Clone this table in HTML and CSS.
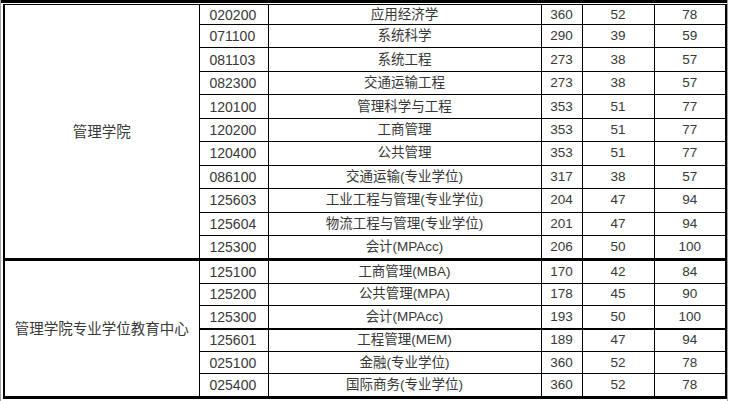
FILE: index.html
```html
<!DOCTYPE html>
<html lang="zh">
<head>
<meta charset="utf-8">
<link rel="stylesheet" href="styles.css">
</head>
<body>
<div class="frame">
  <div class="topbar"></div>
  <table class="grid">
    <colgroup>
      <col class="c-dept"><col class="c-code"><col class="c-name"><col class="c-n1"><col class="c-n2"><col class="c-n3">
    </colgroup>
    <tbody class="g1">
      <tr class="first"><td class="dept" rowspan="11">管理学院</td><td class="code">020200</td><td class="name">应用经济学</td><td class="num">360</td><td class="num">52</td><td class="num">78</td></tr>
      <tr><td class="code">071100</td><td class="name">系统科学</td><td class="num">290</td><td class="num">39</td><td class="num">59</td></tr>
      <tr><td class="code">081103</td><td class="name">系统工程</td><td class="num">273</td><td class="num">38</td><td class="num">57</td></tr>
      <tr><td class="code">082300</td><td class="name">交通运输工程</td><td class="num">273</td><td class="num">38</td><td class="num">57</td></tr>
      <tr><td class="code">120100</td><td class="name">管理科学与工程</td><td class="num">353</td><td class="num">51</td><td class="num">77</td></tr>
      <tr><td class="code">120200</td><td class="name">工商管理</td><td class="num">353</td><td class="num">51</td><td class="num">77</td></tr>
      <tr><td class="code">120400</td><td class="name">公共管理</td><td class="num">353</td><td class="num">51</td><td class="num">77</td></tr>
      <tr><td class="code">086100</td><td class="name">交通运输(专业学位)</td><td class="num">317</td><td class="num">38</td><td class="num">57</td></tr>
      <tr><td class="code">125603</td><td class="name">工业工程与管理(专业学位)</td><td class="num">204</td><td class="num">47</td><td class="num">94</td></tr>
      <tr><td class="code">125604</td><td class="name">物流工程与管理(专业学位)</td><td class="num">201</td><td class="num">47</td><td class="num">94</td></tr>
      <tr class="group-end"><td class="code">125300</td><td class="name">会计(MPAcc)</td><td class="num">206</td><td class="num">50</td><td class="num">100</td></tr>
    </tbody>
    <tbody class="g2">
      <tr><td class="dept" rowspan="6">管理学院专业学位教育中心</td><td class="code">125100</td><td class="name">工商管理(MBA)</td><td class="num">170</td><td class="num">42</td><td class="num">84</td></tr>
      <tr><td class="code">125200</td><td class="name">公共管理(MPA)</td><td class="num">178</td><td class="num">45</td><td class="num">90</td></tr>
      <tr class="mid-thick"><td class="code">125300</td><td class="name">会计(MPAcc)</td><td class="num">193</td><td class="num">50</td><td class="num">100</td></tr>
      <tr><td class="code">125601</td><td class="name">工程管理(MEM)</td><td class="num">189</td><td class="num">47</td><td class="num">94</td></tr>
      <tr><td class="code">025100</td><td class="name">金融(专业学位)</td><td class="num">360</td><td class="num">52</td><td class="num">78</td></tr>
      <tr class="group-end"><td class="code">025400</td><td class="name">国际商务(专业学位)</td><td class="num">360</td><td class="num">52</td><td class="num">78</td></tr>
    </tbody>
  </table>
</div>
</body>
</html>
```

FILE: styles.css
```css
html, body {
  margin: 0;
  padding: 0;
  background: #ffffff;
}

.frame {
  width: 726px;
  height: 401px;
  border-left: 1px solid #a3a3a3;
  border-right: 1px solid #a3a3a3;
  overflow: hidden;
  font-family: "Liberation Sans", "Noto Sans CJK SC", sans-serif;
  font-size: 13.5px;
  color: #383838;
}

.topbar {
  height: 3px;
  background: #000000;
  margin-bottom: 1px;
}

.grid {
  border-collapse: collapse;
  table-layout: fixed;
  width: 723px;
  margin-left: 2px;
}

.c-dept { width: 195px; }
.c-code { width: 69px; }
.c-name { width: 273px; }
.c-n1 { width: 41px; }
.c-n2 { width: 72px; }
.c-n3 { width: 72px; }

.grid td {
  border: 1px solid #000000;
  padding: 0;
  height: 21.4px;
  line-height: 16px;
  white-space: nowrap;
  vertical-align: middle;
}

.g1 td {
  height: 22.45px;
}

.grid .g1 tr.first td.code,
.grid .g1 tr.first td.name,
.grid .g1 tr.first td.num {
  height: 19px;
}

.grid td.dept {
  text-align: center;
  font-size: 14.5px;
  border-left: 2px solid #000000;
  border-bottom: 3px solid #000000;
}

.grid td.code {
  text-align: left;
  font-size: 14px;
  padding-left: 10px;
}

.grid td.name,
.grid td.num {
  text-align: center;
}

.grid td:last-child {
  border-right: 2px solid #000000;
}

.grid tr.group-end td {
  border-bottom: 3px solid #000000;
}

.grid tr.mid-thick td {
  border-bottom: 2px solid #000000;
}
```
